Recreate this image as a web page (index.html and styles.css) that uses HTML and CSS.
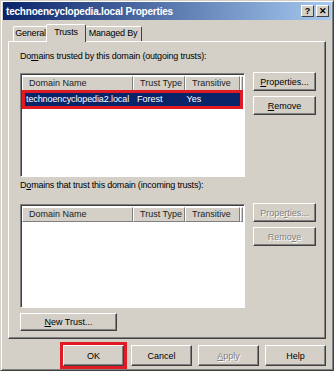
FILE: index.html
```html
<!DOCTYPE html>
<html lang="en">
<head>
    <meta charset="UTF-8">
    <title>technoencyclopedia.local Properties</title>
    <link rel="stylesheet" href="styles.css">
</head>
<body>
<div class="window">
    <div class="titlebar">
        <span class="caption">technoencyclopedia.local Properties</span>
        <span class="tb-btn">?</span>
        <span class="tb-btn">&#x2715;</span>
    </div>
    <div class="tabs">
        <span class="tab">General</span>
        <span class="tab active">Trusts</span>
        <span class="tab">Managed By</span>
    </div>
    <div class="page">
        <div class="label">Do<u>m</u>ains trusted by this domain (outgoing trusts):</div>
        <div class="row">
            <div class="list">
                <div class="head">
                    <span class="c1">Domain Name</span>
                    <span class="c2">Trust Type</span>
                    <span class="c3">Transitive</span>
                    <span class="c4"></span>
                </div>
                <div class="item">
                    <span class="c1">technoencyclopedia2.local</span>
                    <span class="c2">Forest</span>
                    <span class="c3">Yes</span>
                </div>
            </div>
            <div class="side">
                <button class="btn"><u>P</u>roperties...</button>
                <button class="btn"><u>R</u>emove</button>
            </div>
        </div>
        <div class="label second">D<u>o</u>mains that trust this domain (incoming trusts):</div>
        <div class="row">
            <div class="list">
                <div class="head">
                    <span class="c1">Domain Name</span>
                    <span class="c2">Trust Type</span>
                    <span class="c3">Transitive</span>
                    <span class="c4"></span>
                </div>
            </div>
            <div class="side">
                <button class="btn off">Prope<u>r</u>ties...</button>
                <button class="btn off">Remo<u>v</u>e</button>
            </div>
        </div>
        <button class="btn newtrust"><u>N</u>ew Trust...</button>
    </div>
    <div class="footer">
        <button class="btn ok">OK</button>
        <button class="btn">Cancel</button>
        <button class="btn off"><u>A</u>pply</button>
        <button class="btn">Help</button>
    </div>
</div>
</body>
</html>
```

FILE: styles.css
```css
*{margin:0;padding:0;box-sizing:border-box;}
body{background:#d4d0c8;font-family:"Liberation Sans",Arial,sans-serif;font-size:9px;color:#000;}
.window{width:334px;height:371px;border:1px solid;border-color:#d4d0c8 #404040 #404040 #d4d0c8;box-shadow:inset 1px 1px #fff,inset -1px -1px #808080;padding:1px 2px 2px 2px;background:#d4d0c8;}
.titlebar{height:18px;display:flex;align-items:center;gap:2px;padding:0 2px 0 3px;background:linear-gradient(to right,#0a246a,#a6caf0);color:#fff;}
.caption{flex:1;font-weight:bold;font-size:10px;letter-spacing:-0.2px;}
.tb-btn{width:13px;height:12px;background:#d4d0c8;color:#000;font-weight:bold;font-size:9px;line-height:10px;text-align:center;border:1px solid;border-color:#fff #404040 #404040 #fff;}

.tabs{display:flex;align-items:flex-end;height:21px;padding-left:10px;}
.tab{height:15px;line-height:13px;white-space:nowrap;text-align:center;letter-spacing:-0.2px;border:1px solid;border-bottom:none;border-color:#fff #404040 #404040 #fff;border-radius:2px 2px 0 0;}
.tabs .tab:first-child{width:35px;}
.tab.active{height:18px;margin:0 -2px -1px;width:40px;position:relative;z-index:1;background:#d4d0c8;padding-top:1px;}
.tab:last-child{width:58px;}

.page{margin:0 5px;height:298px;border:1px solid;border-color:#fff #404040 #404040 #fff;box-shadow:inset -1px -1px #808080;padding:8px 9px 0 11px;}
.label{height:13px;line-height:13px;margin-bottom:10px;letter-spacing:-0.2px;}
.label.second{margin:2px 0 12px;}
.row{display:flex;gap:8px;}
.list{width:225px;height:104px;background:#fff;border:1px solid;border-color:#808080 #fff #fff #808080;box-shadow:inset 1px 1px #404040;padding:2px 1px 0 1px;}
.head{display:flex;height:15px;}
.head span{background:#d4d0c8;border:1px solid;border-color:#fff #808080 #808080 #fff;line-height:13px;padding-left:6px;color:#222;}
.c1{width:111px;}
.c2{width:52px;}
.c3{width:55px;}
.head .c4{flex:1;padding:0;}
.item{display:flex;height:13px;line-height:13px;margin:2px 3px 0 3px;background:#0a246a;color:#fff;outline:3px solid #e01b24;}
.item .c1{width:110px;padding-left:1px;letter-spacing:-0.1px;}
.item .c2{padding-left:3px;}
.item .c3{padding-left:1px;}

.side{display:flex;flex-direction:column;gap:5px;margin-top:-1px;}
.btn{font-family:inherit;font-size:9px;width:63px;height:19px;background:#d4d0c8;color:#000;border:1px solid;border-color:#fff #404040 #404040 #fff;box-shadow:inset -1px -1px #808080;cursor:default;}
.btn.off{color:#808080;text-shadow:1px 1px #fff;}
.newtrust{width:97px;height:18px;margin-top:5px;}

.footer{display:flex;justify-content:flex-end;gap:6px;padding:6px 5px 0 0;}
.footer .btn{width:61px;height:21px;}
.footer .ok{outline:3px solid #e01b24;margin-right:1px;}
```
